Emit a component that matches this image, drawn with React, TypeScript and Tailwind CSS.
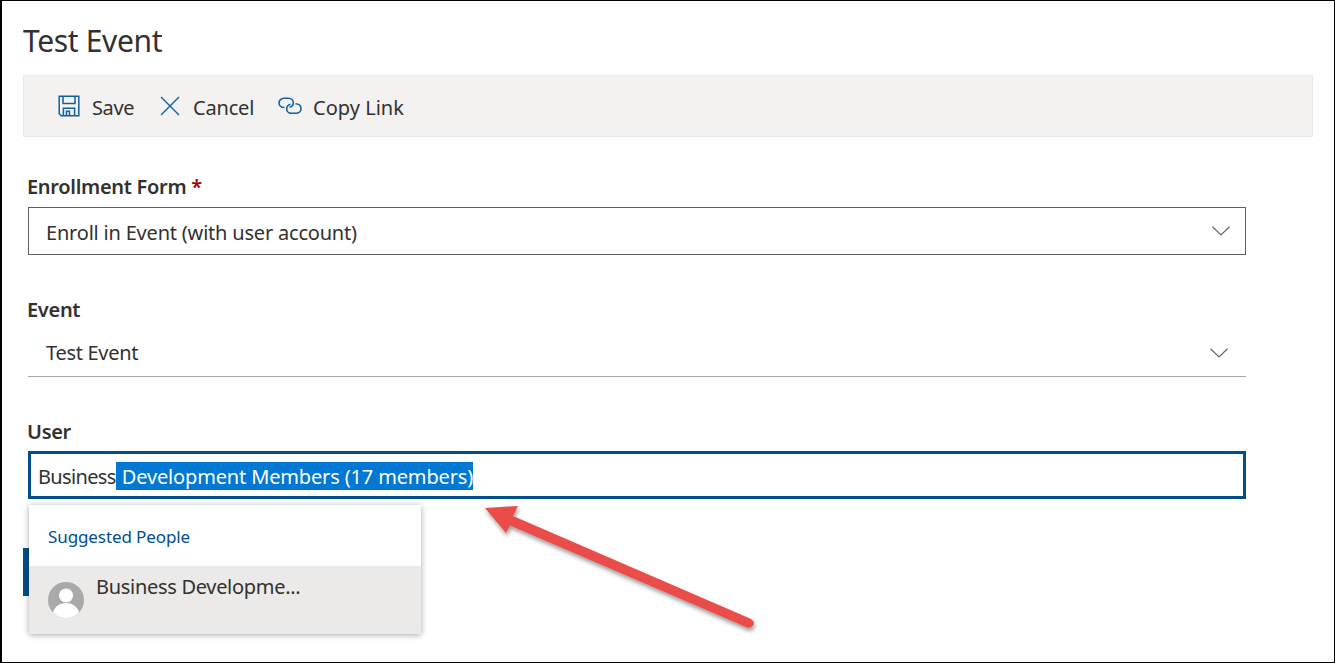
import React from 'react';

const Chevron: React.FC = () => (
  <svg width="18" height="10" viewBox="0 0 18 10" fill="none" stroke="#666666" strokeWidth="1.2">
    <path d="M0.5 0.8 L9 9 L17.5 0.8" />
  </svg>
);

const SaveIcon: React.FC = () => (
  <svg width="22" height="22" viewBox="0 0 22 22" fill="none" stroke="#155f9b" strokeWidth="1.5">
    <path d="M1.2 1.2 H20.8 V20.8 H3.2 L1.2 18.8 Z" />
    <path d="M5 1.2 V8.6 H17 V1.2" />
    <path d="M5.4 20.8 V13.2 H16.6 V20.8" />
    <path d="M8.5 20.8 V16.2 H11.5 V20.8" />
  </svg>
);

const CancelIcon: React.FC = () => (
  <svg width="20" height="20" viewBox="0 0 20 20" fill="none" stroke="#155f9b" strokeWidth="1.4">
    <path d="M1 1 L19 19 M19 1 L1 19" />
  </svg>
);

const LinkIcon: React.FC = () => (
  <svg width="24" height="18" viewBox="0 0 24 18" fill="none" stroke="#155f9b" strokeWidth="1.6">
    <path d="M6.5 10.5 C3 10.5 1 8.5 1 6 C1 3.2 3.2 1.2 6 1.2 H10.5 C13.5 1.2 15.3 3.2 15.3 5.5 C15.3 7.8 13.8 9.8 11.5 10.3" />
    <path d="M17.5 6.8 C21 6.8 23 9 23 11.5 C23 14.3 20.8 16.3 18 16.3 H13.5 C10.5 16.3 8.7 14.3 8.7 12 C8.7 9.7 10.2 7.7 12.5 7.2" />
  </svg>
);

const Avatar: React.FC = () => (
  <svg width="36" height="36" viewBox="0 0 36 36">
    <defs>
      <clipPath id="avatar-clip">
        <circle cx="18" cy="18" r="18" />
      </clipPath>
    </defs>
    <g clipPath="url(#avatar-clip)">
      <rect width="36" height="36" fill="#a9a9a9" />
      <circle cx="18" cy="13.5" r="7" fill="#ffffff" />
      <ellipse cx="18" cy="32" rx="13" ry="11" fill="#ffffff" />
    </g>
  </svg>
);

const Arrow: React.FC = () => (
  <svg width="290" height="150" viewBox="0 0 290 150" className="absolute left-[475px] top-[495px]">
    <defs>
      <filter id="arrow-shadow" x="-10%" y="-20%" width="120%" height="140%">
        <feDropShadow dx="1" dy="3" stdDeviation="2" floodColor="#000000" floodOpacity="0.4" />
      </filter>
    </defs>
    <g filter="url(#arrow-shadow)">
      <path d="M8 12 L41 10 L36 20 L273 122.5 Q278 125 276.5 129 Q274 132.5 270 131.5 L33 29.5 L29 37 Z" fill="#ea4e48" />
    </g>
  </svg>
);

const labelClass = "-ml-px text-[20px] leading-[28px] font-semibold text-[#323130] tracking-[-0.3px]";
const bodyClass = "pt-[3px] text-[20px] leading-[28px] text-[#323130] tracking-[-0.2px]";

export default function App() {
  return (
    <div className="relative h-[663px] w-[1335px] overflow-hidden border border-black border-l-2 bg-white pl-[21px] pr-[20px] font-['Noto_Sans',sans-serif]">
      <h1 className="mt-[20px] text-[30px] leading-[40px] text-[#323130] tracking-[-0.35px]">Test Event</h1>

      <div className="mt-[14px] flex h-[62px] w-[1290px] items-center border border-[#eaeaea] bg-[#f3f2f1] pl-[34px]">
        <div className="flex items-center gap-[12px]">
          <SaveIcon />
          <span className={`${bodyClass} tracking-[-0.4px]`}>Save</span>
        </div>
        <div className="ml-[26px] flex items-center gap-[13px]">
          <CancelIcon />
          <span className={bodyClass}>Cancel</span>
        </div>
        <div className="ml-[24px] flex items-center gap-[11px]">
          <LinkIcon />
          <span className={`${bodyClass} tracking-[0px]`}>Copy Link</span>
        </div>
      </div>

      <div className="ml-[5px] w-[1218px]">
        <div className={`mt-[36px] ${labelClass}`}>
          Enrollment Form <span className="text-[#a80000]">*</span>
        </div>
        <div className="mt-[6px] flex h-[48px] items-center justify-between border border-[#605e5c] pl-[17px] pr-[15px]">
          <span className={bodyClass}>Enroll in Event (with user account)</span>
          <Chevron />
        </div>

        <div className={`mt-[41px] ${labelClass}`}>Event</div>
        <div className="mt-[6px] flex h-[47px] items-center justify-between border-b border-[#a6a6a6] pl-[18px] pr-[18px]">
          <span className="text-[20px] leading-[28px] text-[#323130] tracking-[-0.3px]">Test Event</span>
          <Chevron />
        </div>

        <div className={`mt-[41px] ${labelClass}`}>User</div>
        <div className="mt-[5px] flex h-[48px] items-center border-[3px] border-[#004e8c] pl-[7px]">
          <span className={`${bodyClass} tracking-[-0.65px]`}>Business</span>
          <span className="mt-[2px] bg-[#0078d4] pl-[6px] pt-px text-[20px] leading-[27px] text-white tracking-[-0.15px]">
            Development Members (17 members)
          </span>
        </div>
      </div>

      {/* primary button peeking out behind the suggestion list */}
      <div className="absolute left-[21px] top-[547px] h-[48px] w-[120px] bg-[#004e8c]" />

      <div className="absolute left-[27px] top-[504px] h-[129px] w-[392px] bg-white shadow-[0_1px_6px_rgba(0,0,0,0.35)]">
        <div className="flex h-[61px] items-center pl-[19px] pt-[2px] text-[17px] text-[#004e8c] tracking-[-0.1px]">
          Suggested People
        </div>
        <div className="flex h-[68px] bg-[#ebeae8] pl-[19px]">
          <div className="mt-[16px]">
            <Avatar />
          </div>
          <span className={`ml-[12px] mt-[4px] ${bodyClass} tracking-[-0.3px]`}>Business Developme...</span>
        </div>
      </div>

      <Arrow />
    </div>
  );
}
